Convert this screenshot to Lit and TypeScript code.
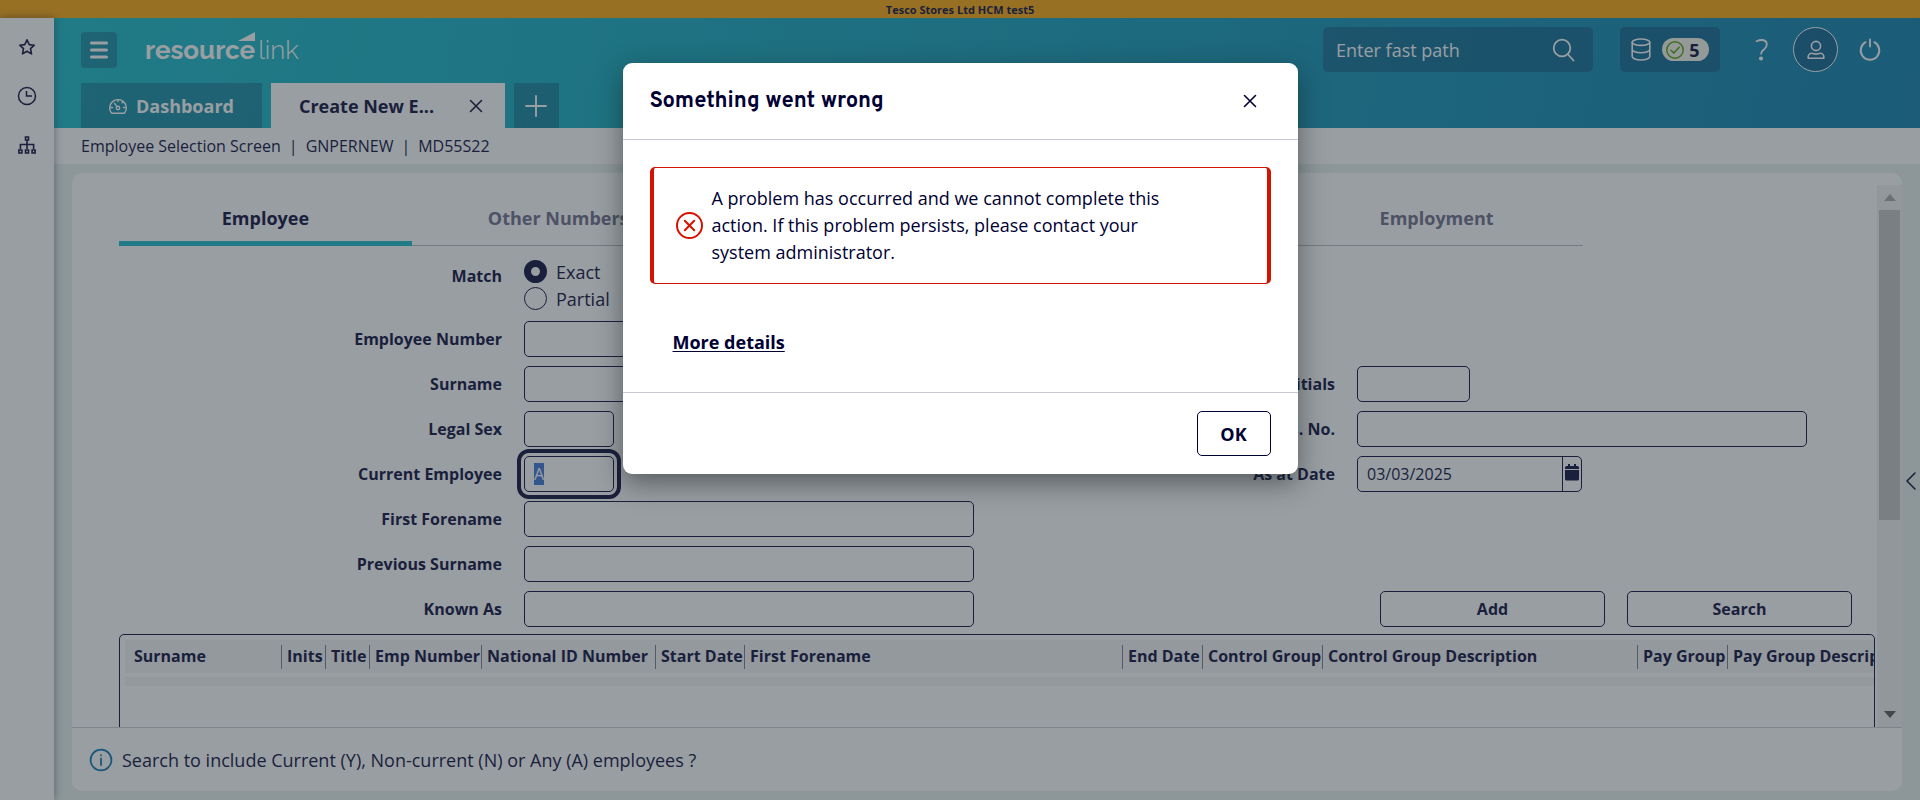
import { LitElement, html, css, svg } from "lit";
import { customElement } from "lit/decorators.js";
import { classMap } from "lit/directives/class-map.js";

type Column = { name: string; width: number };

const SECTIONS = ["Employee", "Other Numbers", "Address", "Personal", "Employment"];

const COLUMNS: Column[] = [
  { name: "Surname", width: 156 },
  { name: "Inits", width: 44 },
  { name: "Title", width: 44 },
  { name: "Emp Number", width: 112 },
  { name: "National ID Number", width: 174 },
  { name: "Start Date", width: 89 },
  { name: "First Forename", width: 378 },
  { name: "End Date", width: 80 },
  { name: "Control Group", width: 120 },
  { name: "Control Group Description", width: 315 },
  { name: "Pay Group", width: 90 },
  { name: "Pay Group Description", width: 220 },
];

const icon = (w: number, h: number, body: unknown, stroke = 2) => html`
  <svg width=${w} height=${h} viewBox="0 0 ${w} ${h}" fill="none" stroke="currentColor"
    stroke-width=${stroke} stroke-linecap="round" stroke-linejoin="round" aria-hidden="true">${body}</svg>`;

const closeIcon = icon(14, 14, svg`<path d="M1.500 1.500l11 11M12.500 1.500l-11 11"/>`, 1.6);

@customElement("app-root")
export class AppRoot extends LitElement {
  static styles = css`
    :host {
      --navy: #000033;
      --line: #c9c9d6;
      display: flex;
      flex-direction: column;
      height: 100vh;
      overflow: hidden;
      position: relative;
      color: var(--navy);
      background: #e7efeb;
      font: 16px/24px "Open Sans", "Noto Sans", sans-serif;
    }
    * { box-sizing: border-box; }
    button, input { font: inherit; color: inherit; margin: 0; }
    button { padding: 0; border: 0; background: none; display: flex; align-items: center; justify-content: center; }
    svg { display: block; flex: none; }
    h2, p, nav { margin: 0; }

    .banner {
      background: #fba300;
      font: bold 11px/20px "Open Sans", sans-serif;
      text-align: center;
      height: 18px;
      flex: none;
    }
    .shell { display: flex; flex: 1; min-height: 0; }
    .rail {
      width: 54px;
      flex: none;
      background: #fff;
      box-shadow: 0 0 9px rgba(0, 0, 20, 0.45);
      display: flex;
      flex-direction: column;
      align-items: center;
      padding-top: 17px;
      gap: 26px;
      z-index: 1;
    }
    .rail button { width: 24px; height: 23px; }
    .main { flex: 1; min-width: 0; display: flex; flex-direction: column; }

    .header {
      height: 110px;
      flex: none;
      display: flex;
      flex-direction: column;
      justify-content: space-between;
      padding: 9px 38px 0 27px;
      background: linear-gradient(100deg, #0db9c8 0%, #08a0bb 45%, #0379a9 100%);
      color: #fff;
    }
    .topline { display: flex; align-items: center; height: 45px; }
    .menu { width: 36px; height: 36px; border-radius: 4px; background: rgba(0, 0, 51, 0.25); }
    .logo { margin-left: 28px; font: 26px/38px Raleway, Lato, sans-serif; flex: 1; color: #fff; text-decoration: none; }
    .logo b { font-weight: 700; position: relative; }
    .logo span { font-weight: 300; margin-left: 3px; }
    .logo svg { position: absolute; right: 0; bottom: 24px; }
    .fastpath {
      display: flex;
      align-items: center;
      width: 270px;
      height: 45px;
      padding: 0 18px 0 13px;
      border-radius: 5px;
      background: rgba(0, 0, 51, 0.25);
    }
    .fastpath input { flex: 1; min-width: 0; border: 0; padding: 2px 0 0; background: none; font-size: 18px; line-height: 27px; outline: 0; }
    .fastpath input::placeholder { color: #fff; opacity: 1; }
    .jobs { width: 100px; height: 45px; margin-left: 27px; gap: 11px; border-radius: 5px; background: rgba(0, 0, 51, 0.25); color: #fff; }
    .pill { display: flex; align-items: center; gap: 5px; height: 23px; padding: 0 9px 0 4px; border-radius: 12px; background: #f3f7ea; color: var(--navy); font-weight: 700; font-size: 18px; }
    .pill svg { color: #4f9a00; }
    .help { margin-left: 32px; width: 20px; height: 45px; color: #fff; }
    .user { margin-left: 21px; width: 45px; height: 45px; border-radius: 50%; border: 1px solid #fff; background: rgba(0, 0, 51, 0.25); color: #fff; }
    .power { margin-left: 20px; color: #fff; }

    .tabs { display: flex; gap: 9px; height: 45px; font-size: 18px; font-weight: 700; }
    .tab { height: 45px; background: rgba(0, 0, 51, 0.25); color: #fff; padding: 0 28px; gap: 9px; font-weight: 700; }
    .tab.active { display: flex; align-items: center; width: 234px; justify-content: space-between; background: #fff; color: var(--navy); padding: 0 22px 0 28px; }
    .tab.add { width: 45px; padding: 0; }
    .crumbs { height: 36px; flex: none; background: #fff; padding: 0 27px; line-height: 36px; display: flex; gap: 8px; }

    .card { flex: 1; min-height: 0; margin: 9px 18px; padding-top: 12px; background: #fff; border-radius: 10px; display: flex; flex-direction: column; }
    .scroller { flex: 1; min-height: 0; display: flex; }
    .content { flex: 1; min-width: 0; overflow: hidden; padding: 0 2px 0 47px; }
    .sections { display: flex; width: 1464px; max-width: 100%; height: 61px; border-bottom: 1px solid #b5b9bd; }
    .sections button { flex: 1; height: 61px; padding-top: 10px; font-size: 18px; font-weight: 700; color: #666685; border-bottom: 5px solid transparent; }
    .sections .current { color: var(--navy); border-bottom-color: #0db9c8; }

    .form { display: grid; grid-template-columns: 383px 450px 339px 1fr; gap: 9px 22px; padding-top: 12px; }
    .label { grid-column: 1; height: 36px; line-height: 36px; font-weight: 700; text-align: right; }
    .label.right { grid-column: 3; }
    .box { height: 36px; width: 100%; padding: 0 9px; border: 1px solid var(--navy); border-radius: 5px; background: #fff; line-height: 27px; outline: 0; }
    .w90 { width: 90px; }
    .w113 { width: 113px; }
    .w450 { width: 450px; }
    .c2 { grid-column: 2; }
    .c4 { grid-column: 4; }
    .ring { outline: 4px solid var(--navy); outline-offset: 3px; }
    .ring::selection { background: #326fd8; color: #fff; }
    .radios { display: flex; flex-direction: column; }
    .radios label { display: flex; align-items: center; gap: 9px; height: 27px; font-size: 18px; }
    .radios input { appearance: none; width: 23px; height: 23px; border: 1px solid var(--navy); border-radius: 50%; background: #fff; }
    .radios input:checked { border-width: 7px; }
    .date { display: flex; width: 225px; height: 36px; border: 1px solid var(--navy); border-radius: 5px; overflow: hidden; }
    .date input { flex: 1; min-width: 0; border: 0; padding: 0 9px; background: none; outline: 0; }
    .date button { width: 19px; border-left: 1px solid var(--navy); padding-bottom: 3px; }
    .actions { display: flex; gap: 22px; padding-left: 23px; }
    .actions button { width: 225px; height: 36px; border: 1px solid var(--navy); border-radius: 5px; font-weight: 700; }

    .grid { margin-top: 7px; border: 1px solid var(--navy); border-radius: 5px; height: 225px; padding: 5px 0 0 5px; overflow: hidden; }
    .grid table { table-layout: fixed; border-collapse: collapse; width: 1822px; }
    .grid th { padding: 4px 0; background: #f3f4f4; text-align: left; font-weight: 700; height: 33px; white-space: nowrap; }
    .grid th div { border-left: 1px solid #77778f; padding-left: 5px; line-height: 22px; height: 24px; }
    .grid th:first-child div { border: 0; padding-left: 9px; }
    .stripe { margin-top: 4px; height: 9px; background: #f3f4f4; }

    .scrollbar { width: 25px; flex: none; background: #f1f1f1; display: flex; flex-direction: column; align-items: center; }
    .arrow { height: 25px; flex: none; display: flex; align-items: center; color: #a3a3a3; }
    .arrow.down { color: #505050; }
    .track { flex: 1; width: 21px; }
    .thumb { height: 63%; background: #c1c1c1; }
    .status { height: 64px; flex: none; border-top: 1px solid #c9cdd0; display: flex; align-items: center; gap: 9px; padding-left: 17px; font-size: 18px; color: var(--navy); }
    .status svg { color: #0070b0; }
    .drawer { position: absolute; right: 3px; top: 469px; width: 12px; height: 24px; }

    .scrim { position: absolute; inset: 0; z-index: 2; display: flex; justify-content: center; align-items: flex-start; padding-top: 63px; background: rgba(51, 61, 69, 0.5); }
    .dialog { width: 675px; max-width: 100%; background: #fff; border-radius: 9px; box-shadow: 0 9px 27px rgba(20, 30, 30, 0.5); }
    .dialog header { display: flex; align-items: center; justify-content: space-between; height: 77px; padding: 0 41px 0 27px; border-bottom: 1px solid var(--line); }
    .dialog h2 { font: bold 22px/27px Overpass, Roboto, sans-serif; }
    .message { padding: 27px; }
    .alert { display: flex; align-items: center; gap: 9px; padding: 17px 90px 17px 22px; border: 1px solid #d51100; border-width: 1px 4px; border-radius: 5px; font-size: 18px; line-height: 27px; }
    .alert svg { color: #d51100; }
    .more { display: inline-block; margin: 45px 0 9px 23px; font-size: 18px; line-height: 27px; font-weight: 700; color: inherit; text-underline-offset: 2px; }
    .dialog footer { display: flex; justify-content: flex-end; padding: 18px 27px; border-top: 1px solid var(--line); }
    .ok { width: 74px; height: 45px; border: 1px solid var(--navy); border-radius: 5px; font-size: 18px; font-weight: 700; }
  `;

  firstUpdated() {
    const field = this.renderRoot.querySelector<HTMLInputElement>("#current");
    field?.focus();
    field?.select();
  }

  private field(id: string, label: string, size = "", right = false) {
    return html`
      <label class=${classMap({ label: true, right })} for=${id}>${label}</label>
      <input class="box ${right ? "c4" : "c2"} ${size}" id=${id} type="text" autocomplete="off" />`;
  }

  private renderHeader() {
    return html`
      <header class="header">
        <div class="topline">
          <button class="menu" aria-label="Menu">${icon(20, 20, svg`<path d="M2.5 3h15M2.5 10h15M2.5 17h15"/>`, 3)}</button>
          <a class="logo" href="#" aria-label="resourcelink home"><b>resource<svg width="17" height="9" viewBox="0 0 17 9" fill="currentColor"><path d="M0 9L17 0V9z"/></svg></b><span>link</span></a>
          <div class="fastpath">
            <input type="text" aria-label="Fast path" placeholder="Enter fast path" />
            ${icon(24, 24, svg`<circle cx="11" cy="10" r="8.3"/><path d="M17 16.5l5.5 6"/>`, 1.8)}
          </div>
          <button class="jobs" aria-label="Jobs, 5 complete">
            ${icon(20, 23, svg`<ellipse cx="10" cy="4.2" rx="8.8" ry="3.2"/><path d="M1.2 4.2v14.4c0 1.900 3.900 3.400 8.800 3.400s8.800-1.500 8.800-3.400V4.200M1.200 11.400c0 1.900 3.900 3.400 8.800 3.400s8.800-1.500 8.800-3.400"/>`, 1.6)}
            <span class="pill">${icon(18, 18, svg`<circle cx="9" cy="9" r="8.2"/><path d="M5 9.200l2.900 2.900L13.200 6.200"/>`, 1.5)}5</span>
          </button>
          <button class="help" aria-label="Help">${icon(14, 22, svg`<path d="M1.500 2.200C3.500 1.200 5 1 6.500 1c3.200 0 5.300 1.800 5.300 4.600 0 2.500-1.400 3.600-2.900 4.900-1.500 1.200-2.800 2.200-2.800 4.300"/><circle cx="6" cy="19.500" r="1.200" fill="currentColor"/>`, 1.8)}</button>
          <button class="user" aria-label="Account">${icon(18, 20, svg`<circle cx="9" cy="6" r="4.600"/><path d="M1.200 18.200v-1.400c0-2 1.700-3.500 3.700-3.500 1.300 0 2.400.8 4.100.8s2.800-.8 4.100-.8c2 0 3.700 1.500 3.700 3.500v1.400z"/>`, 1.6)}</button>
          <button class="power" aria-label="Sign out">${icon(24, 24, svg`<path d="M12 1.500v7M7.600 4.200a9.300 9.300 0 1 0 8.800 0"/>`, 1.9)}</button>
        </div>
        <nav class="tabs" aria-label="Open screens">
          <button class="tab">
            ${icon(18, 18, svg`<path d="M2.700 16.300a8.300 8.300 0 1 1 12.600 0z"/><circle cx="9" cy="11" r="1.700"/><path d="M8 9.800L5.500 6.200M9 2.600v2M1.800 10.500h1.700M14.500 10.500h1.700M13 5.800l1-1.100"/>`, 1.4)}
            Dashboard
          </button>
          <div class="tab active"><span>Create New E...</span><button aria-label="Close tab">${closeIcon}</button></div>
          <button class="tab add" aria-label="New tab">${icon(22, 22, svg`<path d="M11 1v20M1 11h20"/>`, 1.900)}</button>
        </nav>
      </header>`;
  }

  private renderForm() {
    return html`
      <form class="form" @submit=${(e: Event) => e.preventDefault()}>
        <span class="label" id="match">Match</span>
        <div class="radios c2" role="radiogroup" aria-labelledby="match">
          <label><input type="radio" name="match" checked />Exact</label>
          <label><input type="radio" name="match" />Partial</label>
        </div>
        ${this.field("number", "Employee Number")}
        ${this.field("surname", "Surname")}
        ${this.field("initials", "Initials", "w113", true)}
        ${this.field("sex", "Legal Sex", "w90")}
        ${this.field("insurance", "Nat. Ins. No.", "w450", true)}
        <label class="label" for="current">Current Employee</label>
        <input class="box c2 w90 ring" id="current" type="text" value="A" />
        <label class="label right" for="date">As at Date</label>
        <div class="date c4">
          <input id="date" type="text" value="03/03/2025" />
          <button type="button" aria-label="Choose date">
            <svg width="14" height="17" viewBox="0 0 14 17" fill="currentColor"><path d="M0 5V3.500Q0 2 1.500 2H3V0h2v2h4V0h2v2h1.500Q14 2 14 3.500V5zM0 6h14v9q0 1.500-1.500 1.500h-11Q0 16.500 0 15z"/></svg>
          </button>
        </div>
        ${this.field("forename", "First Forename")}
        ${this.field("previous", "Previous Surname")}
        ${this.field("known", "Known As")}
        <div class="actions c4"><button type="button">Add</button><button type="submit">Search</button></div>
      </form>`;
  }

  render() {
    return html`
      <div class="banner">Tesco Stores Ltd HCM test5</div>
      <div class="shell">
        <nav class="rail" aria-label="Shortcuts">
          <button aria-label="Favourites">${icon(18, 18, svg`<path d="M9 1.800l2.200 4.800 5.100.6-3.800 3.500 1 5.200L9 13.300l-4.500 2.600 1-5.200L1.700 7.200l5.100-.6z"/>`, 1.6)}</button>
          <button aria-label="Recent">${icon(20, 20, svg`<circle cx="10" cy="10" r="8.500"/><path d="M9.500 5v5H15" stroke-linecap="butt" stroke-linejoin="miter"/>`, 1.5)}</button>
          <button aria-label="Organisation">${icon(18, 18, svg`<path d="M7.500 1h3v3h-3zM.9 14h3v3h-3zM7.500 14h3v3h-3zM14.100 14h3v3h-3zM9 4.500V13M2.400 13V8.500h13.200V13" stroke-linejoin="miter" stroke-linecap="butt"/>`, 1.6)}</button>
        </nav>
        <div class="main">
          ${this.renderHeader()}
          <div class="crumbs"><span>Employee Selection Screen</span><span>|</span><span>GNPERNEW</span><span>|</span><span>MD55S22</span></div>
          <main class="card">
            <div class="scroller">
              <div class="content">
                <nav class="sections" aria-label="Sections">
                  ${SECTIONS.map((name, i) => html`<button class=${classMap({ current: i === 0 })}>${name}</button>`)}
                </nav>
                ${this.renderForm()}
                <div class="grid">
                  <table>
                    <colgroup>${COLUMNS.map((c) => html`<col style="width:${c.width}px" />`)}</colgroup>
                    <thead><tr>${COLUMNS.map((c) => html`<th scope="col"><div>${c.name}</div></th>`)}</tr></thead>
                  </table>
                  <div class="stripe"></div>
                </div>
              </div>
              <div class="scrollbar" aria-hidden="true">
                <div class="arrow"><svg width="12" height="7" fill="currentColor"><path d="M0 7L6 0l6 7z"/></svg></div>
                <div class="track"><div class="thumb"></div></div>
                <div class="arrow down"><svg width="12" height="7" fill="currentColor"><path d="M0 0h12L6 7z"/></svg></div>
              </div>
            </div>
            <footer class="status">
              ${icon(24, 24, svg`<circle cx="12" cy="12" r="10.400"/><path d="M12 10.500v6.500M12 7.200v.1"/>`, 1.8)}
              <span>Search to include Current (Y), Non-current (N) or Any (A) employees ?</span>
            </footer>
          </main>
        </div>
      </div>
      <button class="drawer" aria-label="Open side panel">${icon(12, 20, svg`<path d="M10 2L2 10l8 8"/>`, 1.6)}</button>
      <div class="scrim">
        <section class="dialog" role="dialog" aria-modal="true" aria-labelledby="title">
          <header><h2 id="title">Something went wrong</h2><button aria-label="Close">${closeIcon}</button></header>
          <div class="message">
            <div class="alert" role="alert">
              ${icon(27, 27, svg`<circle cx="13.500" cy="13.500" r="12.500"/><path d="M8.800 8.800l9.400 9.400M18.200 8.800l-9.400 9.400"/>`, 2)}
              <p>A problem has occurred and we cannot complete this action. If this problem persists, please contact your system administrator.</p>
            </div>
            <a class="more" href="#">More details</a>
          </div>
          <footer><button class="ok">OK</button></footer>
        </section>
      </div>`;
  }
}
